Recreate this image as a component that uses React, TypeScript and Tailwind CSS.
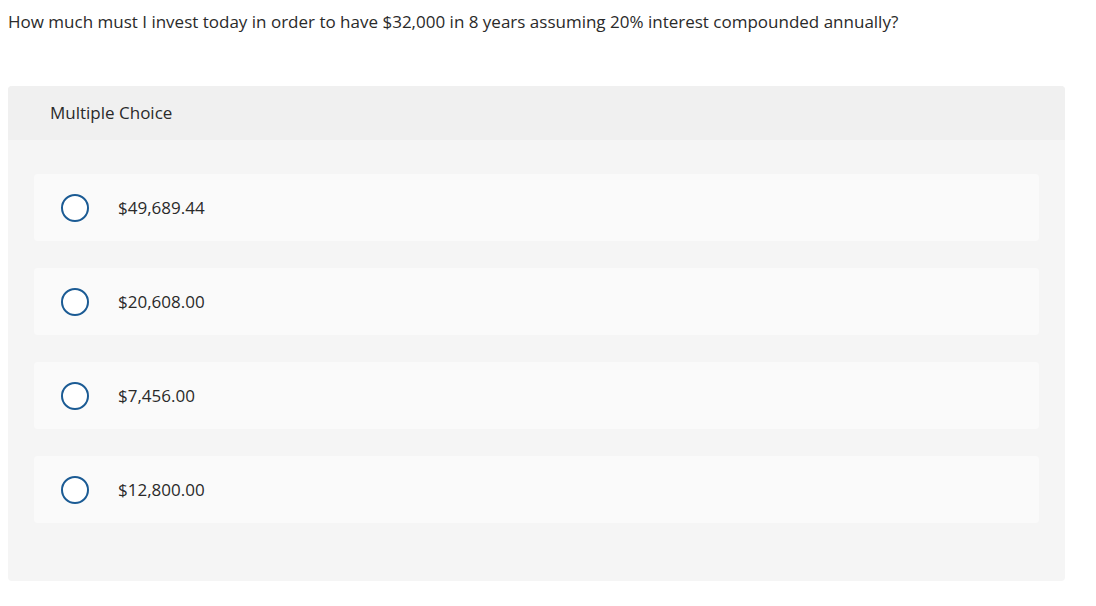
import React from 'react'

const options = ['$49,689.44', '$20,608.00', '$7,456.00', '$12,800.00']

function App() {
  return (
    <div className="min-h-screen bg-white font-['Open_Sans',sans-serif] text-[#2a2a2a]">
      <div className="px-2 pt-[10px]">
        <p className="text-[17px] leading-[24px]">
          How much must I invest today in order to have $32,000 in 8 years assuming 20% interest compounded annually?
        </p>
      </div>

      <div className="ml-2 mt-[52px] w-[1057px] overflow-hidden rounded bg-[#f5f5f5]">
        <div className="flex h-[54px] items-center bg-[#f0f0f0] pl-[42px] text-[17px]">Multiple Choice</div>

        <div className="flex flex-col gap-[27px] px-[26px] pb-[58px] pt-[34px]">
          {options.map((opt) => (
            <div key={opt} className="flex h-[67px] items-center rounded bg-[#fafafa] pl-[27px]">
              <span className="h-[28px] w-[28px] shrink-0 rounded-full border-2 border-[#1b5b94] bg-white"></span>
              <span className="ml-[29px] text-[17px]">{opt}</span>
            </div>
          ))}
        </div>
      </div>
    </div>
  )
}

export default App
